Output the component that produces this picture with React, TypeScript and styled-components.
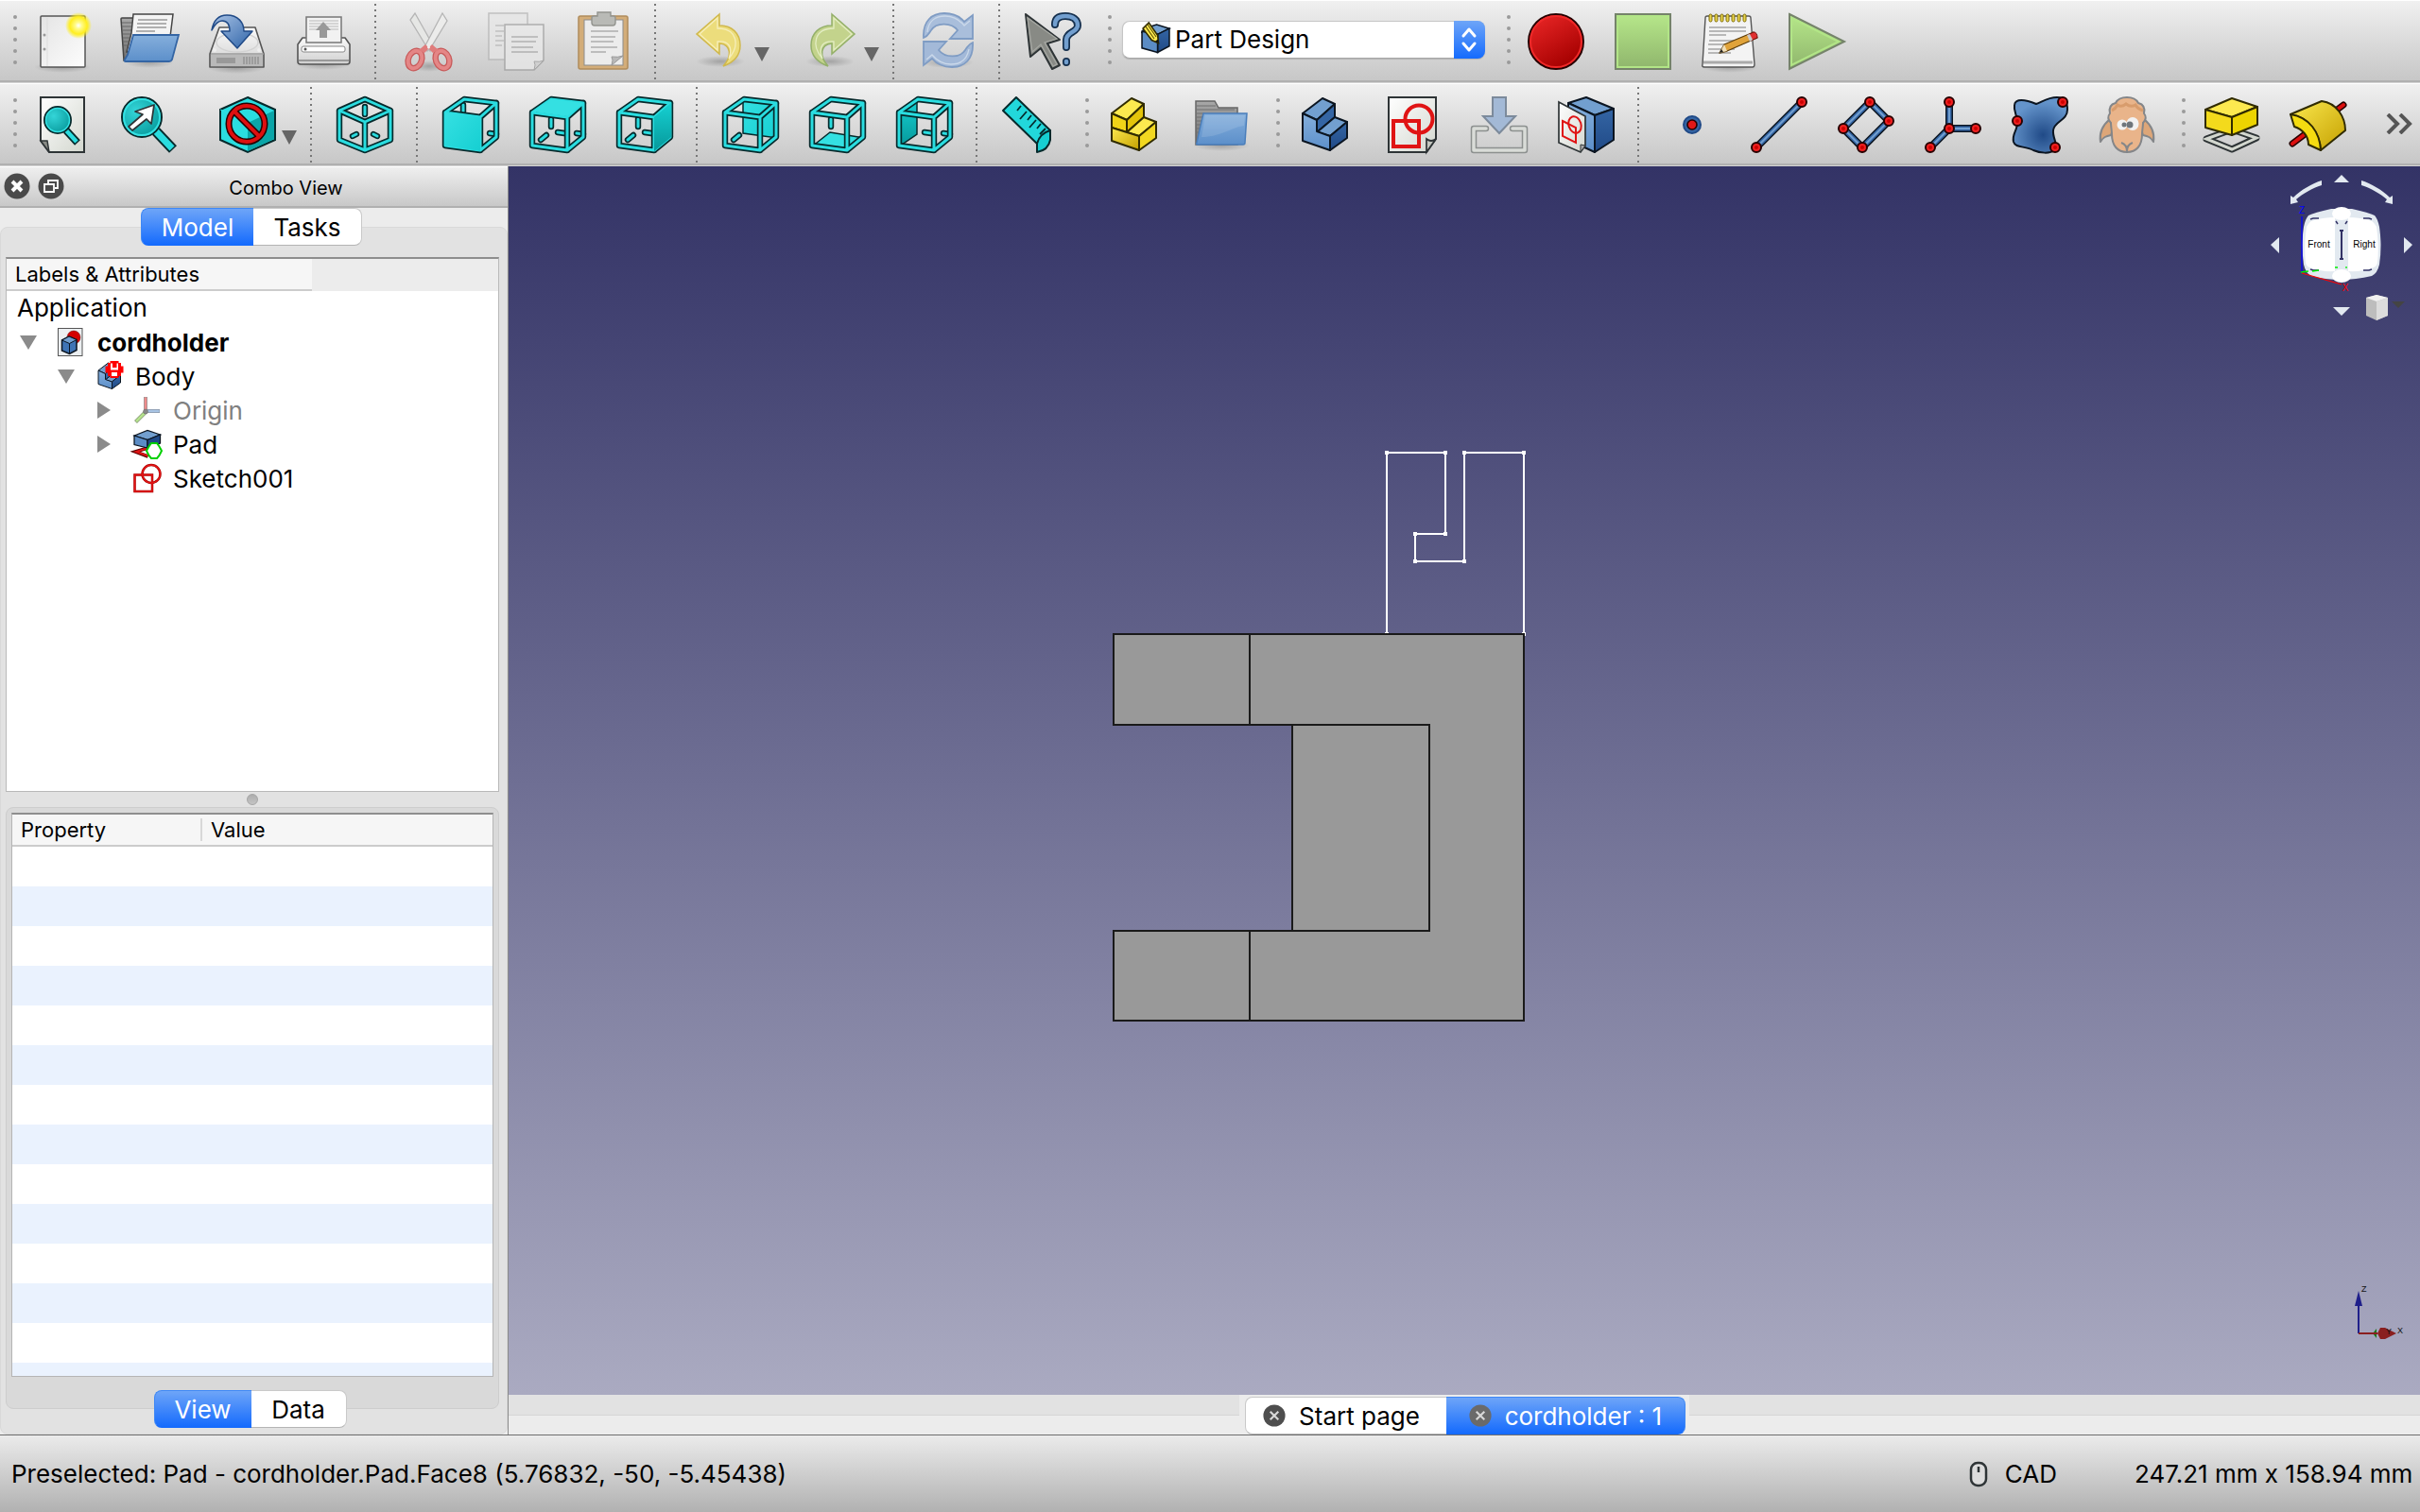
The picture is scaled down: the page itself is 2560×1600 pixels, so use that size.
import React, { useState } from 'react';
import styled, { createGlobalStyle } from 'styled-components';

const Global = createGlobalStyle`
  html, body { margin: 0; padding: 0; }
  body {
    font-family: Inter, "Liberation Sans", sans-serif;
    font-size: 26px;
    color: #000;
    background: #ececec;
    overflow: hidden;
  }
  *, *::before, *::after { box-sizing: border-box; }
  button, select { font: inherit; color: inherit; }
`;

/* ---------- shell ---------- */

const Window = styled.div`
  display: flex;
  flex-direction: column;
  height: 100vh;
`;

const ToolRow = styled.div`
  display: flex;
  flex: none;
  height: 88px;
  border-top: 1px solid #fff;
  border-bottom: 1px solid #d4d4d4;
  box-shadow: inset 0 -2px 0 #b0b0b0;
  background: linear-gradient(#f0f0f0, #c6c6c6);
`;

const ToolGroup = styled.div`
  display: flex;
`;

const Grip = styled.div<{ $narrow?: boolean }>`
  width: ${p => (p.$narrow ? 18 : 20)}px;
  padding: 15px 2px 0 0;
  display: flex;
  flex-direction: column;
  align-items: flex-end;
  gap: 8px;
`;

const GripDot = styled.span`
  width: 4px;
  height: 4px;
  border-radius: 50%;
  background: #9a9a9a;
`;

const Divider = styled.div`
  width: 20px;
  padding: 3px 0 0 8px;
  &::before {
    content: '';
    display: block;
    width: 2px;
    height: 80px;
    background: repeating-linear-gradient(#777 0 2px, transparent 2px 6px);
  }
`;

const ToolButton = styled.button<{ $menu?: boolean }>`
  position: relative;
  width: ${p => (p.$menu ? 116 : 92)}px;
  padding: 13px 0 0;
  border: 0;
  background: none;
  display: flex;
  justify-content: center;
  align-items: flex-start;
`;

const MenuArrow = styled.span`
  position: absolute;
  right: 6px;
  top: 49px;
  border: 8px solid transparent;
  border-top: 15px solid #666;
  border-bottom: 0;
`;

const MoreButton = styled.button`
  margin-left: auto;
  padding: 0 8px 0 0;
  border: 0;
  background: none;
`;

const Picker = styled.label`
  position: relative;
  display: block;
  width: 384px;
  height: 40px;
  margin: 21px 9px 0;
`;

const PickerSelect = styled.select`
  appearance: none;
  width: 100%;
  height: 40px;
  padding: 0 50px 1px 55px;
  border: 1px solid #c6c6c6;
  border-bottom-color: #a8a8a8;
  border-radius: 8px;
  background: #fff;
  box-shadow: 0 1px 1px rgba(0, 0, 0, 0.15);
`;

const PickerIcon = styled.span`
  position: absolute;
  left: 20px;
  top: 3px;
  pointer-events: none;
  svg { display: block; }
`;

const PickerStepper = styled.span`
  position: absolute;
  right: 0;
  top: 0;
  width: 33px;
  height: 40px;
  border-radius: 0 8px 8px 0;
  background: linear-gradient(#6ea5f8, #156bfd);
  pointer-events: none;
  svg { display: block; }
`;

const Main = styled.div`
  display: flex;
  flex: 1;
  min-height: 0;
`;

/* ---------- combo view ---------- */

const Sidebar = styled.aside`
  display: flex;
  flex-direction: column;
  flex: none;
  width: 538px;
  border-right: 1px solid #8c8c8c;
  background: #ececec;
`;

const DockTitle = styled.div`
  display: grid;
  grid-template-columns: 68px 1fr;
  align-items: center;
  height: 44px;
  flex: none;
  border-top: 1px solid #fff;
  border-bottom: 2px solid #b0b0b0;
  background: linear-gradient(#efefef, #c8c8c8);
  font-size: 20px;
  text-align: center;
`;

const DockHeading = styled.span`
  padding-top: 3px;
`;

const DockButtons = styled.div`
  display: flex;
  gap: 8px;
  padding: 0 0 2px 4px;
`;

const RoundButton = styled.button`
  padding: 0;
  border: 0;
  background: none;
  display: block;
  svg { display: block; }
`;

const TabBar = styled.div<{ $edge: 'top' | 'bottom' }>`
  position: relative;
  z-index: 1;
  display: flex;
  flex: none;
  align-self: center;
  margin: ${p => (p.$edge === 'top' ? '0 5px -20px 0' : '-20px 5px 0 0')};
`;

const Tab = styled.button<{ $on: boolean; $wide?: number }>`
  display: flex;
  align-items: center;
  justify-content: center;
  gap: 14px;
  height: 40px;
  padding: 0 18px;
  min-width: ${p => p.$wide ?? 0}px;
  border: 1px solid ${p => (p.$on ? '#3f88f5' : '#c9c9c9')};
  border-bottom-color: ${p => (p.$on ? '#156bfd' : '#b4b4b4')};
  color: ${p => (p.$on ? '#fff' : '#000')};
  background: ${p => (p.$on ? 'linear-gradient(#6ea5f8, #156bfd)' : '#fff')};
  white-space: nowrap;
  &:first-child { border-radius: 8px 0 0 8px; border-right: 0; }
  &:last-child { border-radius: 0 8px 8px 0; border-left: 0; }
`;

const Pane = styled.div`
  display: flex;
  flex-direction: column;
  flex: 1;
  min-height: 0;
  padding: 31px 8px 6px 5px;
  border: 1px solid #d9d9d9;
  border-radius: 8px;
  background: #e2e2e2;
`;

const TreeBox = styled.div`
  flex: 563 1 0;
  min-height: 0;
  border: 1px solid #b9b9b9;
  border-top: 2px solid #8e8e8e;
  background: #fff;
  overflow: hidden;
`;

const TreeHeader = styled.div`
  display: flex;
  height: 34px;
  font-size: 22px;
  background: #ececec;
`;

const TreeHeaderCell = styled.div`
  width: 323px;
  padding: 2px 9px 0;
  line-height: 28px;
  background: #f6f6f6;
  border-bottom: 2px solid #ccc;
`;

const TreeList = styled.ul`
  list-style: none;
  margin: 0;
  padding: 0;
`;

const TreeRow = styled.li<{ $depth: number }>`
  display: grid;
  grid-template-columns: 26px 28px;
  grid-auto-flow: column;
  grid-auto-columns: max-content;
  align-items: center;
  column-gap: 14px;
  height: 36px;
  padding-left: ${p => 14 + p.$depth * 40}px;
`;

const TreeRoot = styled.li`
  height: 36px;
  line-height: 36px;
  padding-left: 11px;
`;

const TreeText = styled.span<{ $bold?: boolean; $dim?: boolean }>`
  font-weight: ${p => (p.$bold ? 700 : 400)};
  color: ${p => (p.$dim ? '#808080' : '#000')};
`;

const Twisty = styled.button`
  padding: 0;
  border: 0;
  background: none;
  svg { display: block; }
`;

const SplitHandle = styled.div`
  display: flex;
  align-items: center;
  justify-content: center;
  height: 16px;
  flex: none;
  &::before {
    content: '';
    width: 12px;
    height: 12px;
    border-radius: 50%;
    border: 1px solid #a6a6a6;
    background: linear-gradient(#adadad, #c4c4c4);
  }
`;

const PropertyGroup = styled.div`
  flex: 598 1 0;
  min-height: 0;
  padding: 5px 5px 33px;
  border: 1px solid #cdcdcd;
  border-radius: 8px;
  background: #d9d9d9;
`;

const TableFrame = styled.div`
  height: 100%;
  border: 1px solid #b5b5b5;
  border-top: 2px solid #8e8e8e;
  background: #fff;
  overflow: hidden;
`;

const PropertyTable = styled.table`
  width: 100%;
  table-layout: fixed;
  border-spacing: 0;
  th {
    height: 34px;
    padding: 0 9px 0;
    font-size: 22px;
    font-weight: 400;
    line-height: 28px;
    text-align: left;
    background: #f6f6f6;
    border-bottom: 2px solid #ccc;
  }
  th:first-child {
    width: 201px;
    background: linear-gradient(#d8d8d8, #d8d8d8) right 0 top 4px / 2px 24px no-repeat #f6f6f6;
  }
  td { height: 42px; padding: 0; }
  tbody tr:nth-child(even) { background: #eaf2fe; }
`;

/* ---------- 3D area ---------- */

const Workspace = styled.main`
  display: flex;
  flex-direction: column;
  flex: 1;
  min-width: 0;
`;

const Canvas = styled.div`
  position: relative;
  flex: 1;
  min-height: 0;
  overflow: hidden;
  background: linear-gradient(#333366, #aaaac1);
`;

const ModelDrawing = styled.svg`
  position: absolute;
  left: 638px;
  top: 301px;
`;

const NavCube = styled.svg`
  position: absolute;
  right: 0;
  top: 0;
`;

const AxisCross = styled.svg`
  position: absolute;
  right: 0;
  bottom: 36px;
`;

const DocStrip = styled.div`
  display: flex;
  justify-content: center;
  flex: none;
  height: 42px;
  background: linear-gradient(#e2e2e2 21px, #d6d6d6 21px 22px, #ececec 22px);
`;

const DocTabs = styled.div`
  display: flex;
  padding: 2px 4px 0 6px;
  background: #ececec;
  button:first-child { padding-right: 28px; }
`;

const StatusBar = styled.footer`
  display: flex;
  align-items: center;
  flex: none;
  height: 82px;
  padding: 0 4px 0 12px;
  border-top: 1px solid #6e6e6e;
  background: linear-gradient(#ebebeb, #b1b1b1);
  white-space: nowrap;
`;

const NavStyle = styled.button`
  display: flex;
  align-items: center;
  gap: 18px;
  margin: 0 82px 0 auto;
  padding: 0;
  border: 0;
  background: none;
`;

const Dimensions = styled.span`
  min-width: 298px;
`;

/* ---------- icons ---------- */

const Ico = ({ children, dim, size = 60 }: { children: React.ReactNode; dim?: number; size?: number }) => (
  <svg width={size} height={size} viewBox="0 0 60 60" overflow="visible" opacity={dim ?? 1} aria-hidden="true">
    {children}
  </svg>
);

const HiddenSvg = styled.svg`
  position: absolute;
`;

const Defs = () => (
  <HiddenSvg width="0" height="0" aria-hidden="true">
    <defs>
      <radialGradient id="sun"><stop offset="0" stopColor="#fff" /><stop offset=".25" stopColor="#fffb8a" /><stop offset=".65" stopColor="#ffee20" /><stop offset="1" stopColor="#fe0" stopOpacity="0" /></radialGradient>
      <linearGradient id="page" x2="1" y2="1"><stop offset="0" stopColor="#e4e4e4" /><stop offset="1" stopColor="#fdfdfd" /></linearGradient>
      <linearGradient id="sheet" x2="1" y2="1"><stop offset="0" stopColor="#fff" /><stop offset="1" stopColor="#d3d7cf" /></linearGradient>
      <linearGradient id="blue" x2="0" y2="1"><stop offset="0" stopColor="#85afdc" /><stop offset="1" stopColor="#5c8fca" /></linearGradient>
      <linearGradient id="deep" x2="0" y2="1"><stop offset="0" stopColor="#3465a4" /><stop offset="1" stopColor="#204a87" /></linearGradient>
      <linearGradient id="arrow" x2="1" y2="1"><stop offset="0" stopColor="#a9c3e6" /><stop offset="1" stopColor="#2f64a8" /></linearGradient>
      <linearGradient id="metal" x2="0" y2="1"><stop offset="0" stopColor="#fafafa" /><stop offset="1" stopColor="#cfcfcf" /></linearGradient>
      <linearGradient id="gray" x2="0" y2="1"><stop offset="0" stopColor="#a8a8a8" /><stop offset="1" stopColor="#707070" /></linearGradient>
      <linearGradient id="cyan" x2="1" y2="1"><stop offset="0" stopColor="#34e0e2" /><stop offset="1" stopColor="#16cfd2" /></linearGradient>
      <linearGradient id="teal" x2="0" y2="1"><stop offset="0" stopColor="#16d0d2" /><stop offset="1" stopColor="#06989a" /></linearGradient>
      <radialGradient id="lens" cx=".35" cy=".35" r=".75"><stop offset="0" stopColor="#34d5d8" /><stop offset="1" stopColor="#06989a" /></radialGradient>
      <linearGradient id="red" x2=".6" y2="1"><stop offset="0" stopColor="#ef2929" /><stop offset="1" stopColor="#a40000" /></linearGradient>
      <linearGradient id="green" x2="0" y2="1"><stop offset="0" stopColor="#b6e78a" /><stop offset="1" stopColor="#8fb56c" /></linearGradient>
      <linearGradient id="yellow" x2="1" y2="1"><stop offset="0" stopColor="#fce94f" /><stop offset="1" stopColor="#c4a000" /></linearGradient>
      <radialGradient id="binder" cx=".55" cy=".68" r=".6"><stop offset="0" stopColor="#204a87" /><stop offset="1" stopColor="#6494cb" /></radialGradient>
      <radialGradient id="shade"><stop offset="0" stopColor="#000" stopOpacity=".22" /><stop offset="1" stopColor="#000" stopOpacity="0" /></radialGradient>
    </defs>
  </HiddenSvg>
);

const Shade = ({ cy = 56, rx = 30 }) => <ellipse cx="30" cy={cy} rx={rx} ry="6" fill="url(#shade)" />;

const NewDoc = () => (
  <Ico>
    <Shade cy={57} />
    <rect x="7" y="3" width="47" height="54" rx="1" fill="url(#page)" stroke="#555" strokeWidth="1.5" />
    <path d="M14 5v51" stroke="#ddd" />
    <circle cx="11" cy="23" r="1.5" fill="#999" /><circle cx="11" cy="38" r="1.5" fill="#999" />
    <circle cx="47" cy="13" r="14" fill="url(#sun)" />
  </Ico>
);

const OpenDoc = () => (
  <Ico>
    <Shade cy={52} rx={26} />
    <path d="M0 6q0-1 1-1h11l3 3v30L5 50H3z" fill="url(#gray)" stroke="#444" strokeWidth="1.5" />
    <path d="M1 10h11M1 14h11M2 18h10M2 22h10M2 26h10M2 30h9M3 34h8" stroke="#666" />
    <path d="M13 1h42l-3 24-40 16-6 0 5-20z" fill="#f4f4f4" stroke="#444" strokeWidth="1.5" />
    <path d="M18 7h31M17 11h31M17 15h31M16 19h20" stroke="#999" strokeWidth="1.5" />
    <path d="M13 23h48L54 49q-1 2-3 2H5q-2 0-1-2l3-5z" fill="url(#blue)" stroke="#3465a4" strokeWidth="1.8" />
  </Ico>
);

const SaveDoc = () => (
  <Ico>
    <Shade cy={58} />
    <path d="M12 15h38l9 28v14H2V43z" fill="url(#metal)" stroke="#555" strokeWidth="1.6" strokeLinejoin="round" />
    <ellipse cx="31" cy="31" rx="22" ry="10" fill="none" stroke="#d2d2d2" strokeWidth="1.5" />
    <path d="M3 43h56" stroke="#999" strokeWidth="1.5" />
    <rect x="3" y="44" width="55" height="12" fill="#b9b9b9" /><rect x="9" y="47" width="20" height="6" fill="#999" />
    <path d="M38 46v8M41 46v8M44 46v8M47 46v8M50 46v8M53 46v8" stroke="#808080" />
    <circle cx="7" cy="39" r="2" fill="#eee" /><circle cx="54" cy="39" r="2" fill="#eee" />
    <path d="M4 18C6 7 11 2 20 2c12 0 18 8 18 17h9L31 37 14 19h9C23 11 20 8 15 8 10 8 7 12 4 18z" fill="url(#arrow)" stroke="#204a87" strokeWidth="1.5" strokeLinejoin="round" />
  </Ico>
);

const PrintDoc = () => (
  <Ico>
    <Shade cy={54} />
    <path d="M8 26h45l5 7v18q0 3-3 3H6q-3 0-3-3V33z" fill="url(#metal)" stroke="#555" strokeWidth="1.6" strokeLinejoin="round" />
    <rect x="12" y="4" width="37" height="27" fill="#f2f2f2" stroke="#777" strokeWidth="1.5" />
    <path d="M15 8h31M15 11h31M15 14h31M15 17h31" stroke="#ccc" strokeWidth="1.5" />
    <path d="M30 9l8 9h-4v8h-8v-8h-4z" fill="#999" />
    <rect x="7" y="35" width="46" height="6" rx="2" fill="#fff" stroke="#888" /><circle cx="11" cy="38" r="1.5" fill="#555" />
    <path d="M4 50h53" stroke="#999" strokeWidth="2" />
  </Ico>
);

const CutIcon = () => (
  <Ico>
    <ellipse cx="30" cy="56" rx="18" ry="6" fill="url(#shade)" />
    <path d="M15 0l18 32-2 8-4-5L10 7z" fill="#e6e7e5" stroke="#b5b5b5" strokeWidth="1.3" />
    <path d="M44 0L26 34l2 6 4-4L49 8z" fill="#ececeb" stroke="#b5b5b5" strokeWidth="1.3" />
    <g fill="none" stroke="#c75a5a" strokeWidth="6.5"><ellipse cx="15" cy="49" rx="7" ry="9.5" transform="rotate(22 15 49)" /><ellipse cx="44" cy="49" rx="7" ry="9.5" transform="rotate(-22 44 49)" /></g>
    <g fill="none" stroke="#e48686" strokeWidth="4"><ellipse cx="15" cy="49" rx="7" ry="9.5" transform="rotate(22 15 49)" /><ellipse cx="44" cy="49" rx="7" ry="9.5" transform="rotate(-22 44 49)" /></g>
    <path d="M19 39l7-6 4 4-5 5zM40 39l-7-6-4 4 5 5z" fill="#e07c7c" />
    <circle cx="29.5" cy="36" r="1.5" fill="#eee" />
  </Ico>
);

const CopyIcon = () => (
  <Ico dim={0.75}>
    <rect x="1" y="0" width="41" height="49" fill="#e6e6e6" stroke="#b3b3b3" strokeWidth="1.5" />
    <path d="M8 13h9M8 19h9M8 24h7M8 29h9M8 34h7" stroke="#c2c2c2" strokeWidth="2" />
    <path d="M18 12h41v38l-10 10H18z" fill="#e9e9e9" stroke="#9c9c9c" strokeWidth="1.5" />
    <path d="M25 25h28M25 30h26M25 36h23M25 41h28" stroke="#b5b5b5" strokeWidth="2" />
    <path d="M49 60q2-6 0-9 6 1 10-1z" fill="#d0d0d0" stroke="#999" />
  </Ico>
);

const PasteIcon = () => (
  <Ico>
    <rect x="4" y="3" width="52" height="56" rx="2" fill="#d3ad79" stroke="#b08c5c" strokeWidth="1.5" />
    <rect x="10" y="7" width="41" height="48" fill="#ececec" stroke="#8d8d8d" />
    <path d="M17 19h29M17 25h26M17 30h24M17 36h28M17 41h16" stroke="#bdbdbd" strokeWidth="2" />
    <path d="M39 55q2-6 0-9 7 1 12-1z" fill="#b9b9b9" stroke="#999" />
    <path d="M18 5q0-2 2-2h4v-4h14v4h3q2 0 2 2v5q0 3-3 3H21q-3 0-3-3z" fill="#b9bab6" stroke="#93948f" strokeWidth="1.4" />
  </Ico>
);

const curvedArrow = 'M29 1L5 22l24 21V32c12 1 14 13 4 24 14-5 18-13 18-22C51 21 42 13 29 13z';

const UndoIcon = () => (
  <Ico>
    <Shade cy={51} rx={26} />
    <path d={curvedArrow} fill="#ecdd7c" stroke="#d0b84c" strokeWidth="1.5" />
    <path d="M27 5L8 22l19 17v-9c11-1 17 5 12 18 12-14 9-32-12-32z" fill="none" stroke="#f6eebb" strokeWidth="1.3" />
  </Ico>
);

const RedoIcon = () => (
  <Ico>
    <Shade cy={51} rx={26} />
    <g transform="translate(61 0) scale(-1 1)">
      <path d={curvedArrow} fill="#c3d38c" stroke="#94b06a" strokeWidth="1.5" />
      <path d="M27 5L8 22l19 17v-9c11-1 17 5 12 18 12-14 9-32-12-32z" fill="none" stroke="#e3edc2" strokeWidth="1.3" />
    </g>
  </Ico>
);

const RefreshIcon = () => {
  const half = 'M5 26C4 8 14 0 27 0c9 0 16 3 21 9l9-7v25H33l8-9C34 9 18 10 13 18c-3 4-3 6-8 8z';
  return (
    <Ico>
      <Shade cy={52} rx={28} />
      <path d={half} fill="#a9bedb" stroke="#7f9cc4" strokeWidth="1.8" />
      <path d={half} transform="rotate(180 31 28.5)" fill="#a3b9d8" stroke="#7f9cc4" strokeWidth="1.8" />
      <path d="M9 20C10 8 18 3 28 3c9 0 15 4 20 10l6-5M53 38c-2 11-9 16-19 16-9 0-15-4-20-10l-6 5" fill="none" stroke="#cbd9ea" strokeWidth="1.3" />
    </Ico>
  );
};

const WhatsThis = () => (
  <Ico>
    <path d="M1 1l36 27-13 4 13 23-8 4-12-22-11 9z" fill="#888a85" stroke="#2e3436" strokeWidth="2" strokeLinejoin="round" />
    <path d="M3 5l31 22-13 4 13 23-4 2-13-23-9 8z" fill="none" stroke="#a5a7a2" strokeWidth="1.3" />
    <g fill="none" strokeLinecap="round"><path d="M32 12C32 5 37 3 43 3c8 0 13 4 13 10 0 7-12 7-12 15v8M44 51v1" stroke="#16314f" strokeWidth="8" /><path d="M32 12C32 5 37 3 43 3c8 0 13 4 13 10 0 7-12 7-12 15v8M44 51v1" stroke="#729fcf" strokeWidth="4.5" /></g>
  </Ico>
);

const PartDesignIcon = () => (
  <Ico size={31}>
    <path d="M2 18l4-8 26-8 26 8-24 12z" fill="#729fcf" stroke="#0b1521" strokeWidth="3" />
    <path d="M34 22l24-12v36L34 59z" fill="url(#deep)" stroke="#0b1521" strokeWidth="3" />
    <path d="M2 16l32 6v37L2 50z" fill="#5b8cc5" stroke="#0b1521" strokeWidth="3" />
    <path d="M4 10L16-2l18 26 2 16-14-6z" fill="#fce94f" stroke="#302b00" strokeWidth="3" />
    <path d="M9 5l18 26M13 1l18 26" stroke="#5a4c00" strokeWidth="2" />
    <path d="M29 36l7 4-1-8z" fill="#111" />
  </Ico>
);

const RecordIcon = () => <Ico><circle cx="30" cy="30" r="29" fill="url(#red)" stroke="#280000" strokeWidth="2" /><circle cx="30" cy="30" r="27" fill="none" stroke="#ef2929" strokeWidth="2" /></Ico>;
const StopIcon = () => <Ico><rect x="1" y="1" width="58" height="58" fill="url(#green)" stroke="#75836a" strokeWidth="2" /><rect x="3" y="3" width="54" height="54" fill="none" stroke="#b2e587" strokeWidth="2" /></Ico>;
const PlayIcon = () => <Ico><path d="M1 1l58 29L1 59z" fill="url(#green)" stroke="#75836a" strokeWidth="2" /><path d="M3 5l50 25L3 55z" fill="none" stroke="#b2e587" strokeWidth="2" /></Ico>;

const MacroIcon = () => (
  <Ico>
    <Shade cy={57} />
    <path d="M4 5q0-2 2-2h44q2 0 2 2l4 49q0 3-2 3H3q-3 0-2-3z" fill="#f3f3f3" stroke="#555" strokeWidth="1.4" />
    <path d="M2 52h52" stroke="#aaa" strokeWidth="3" />
    <path d="M8 15h39M8 19h39M8 23h18M8 29h39M7 33h36M7 38h28M7 42h24" stroke="#a5a5a5" strokeWidth="1.3" />
    {[8, 14, 20, 26, 32, 38, 44].map(x => <rect key={x} x={x} y="1" width="3" height="8" rx="1.5" fill="#e8d44a" stroke="#7d6b08" />)}
    <path d="M19 42l5-9 31-13 4 6-32 14z" fill="#e0a33a" stroke="#5c3d0a" strokeWidth="1.3" strokeLinejoin="round" />
    <path d="M49 23l6-3q4 0 4 6l-7 3z" fill="#e03030" stroke="#7a1010" /><path d="M48 23l3-1 3 6-3 2z" fill="#ccc" />
    <path d="M19 42l5-9 3 7z" fill="#f1dfb8" /><path d="M19 42l2-4 2 3z" fill="#222" />
  </Ico>
);

const CY_DARK = '#062a2c';
const Bars = ({ d }: { d: string }) => (
  <g fill="none" strokeLinejoin="round" strokeLinecap="round">
    <path d={d} stroke={CY_DARK} strokeWidth="6.4" /><path d={d} stroke="#2adde0" strokeWidth="3" />
  </g>
);

const tick = { v: 'M23 24v8', d: 'M12 46l6-5', h: 'M30 38l7 1', r: 'M50 39l7 1', vt: 'M22 9v7' };
const cubeFaces: Record<string, { fill: string; color: string; ticks: string }> = {
  Front: { fill: 'M3 17l37 5v36L3 52z', color: 'url(#cyan)', ticks: tick.vt + tick.r },
  Top: { fill: 'M3 16L23 3l34 4-17 14z', color: '#34e0e2', ticks: tick.v + tick.d + tick.h + tick.r },
  Right: { fill: 'M40 22L58 7v36L40 58z', color: 'url(#teal)', ticks: tick.v + tick.d + tick.h },
  Rear: { fill: 'M22 4l36 4v36l-36-5z', color: 'url(#cyan)', ticks: tick.d },
  Bottom: { fill: 'M3 53l19-15 36 6-18 13z', color: '#34e0e2', ticks: tick.v },
  Left: { fill: 'M3 17L22 4v36L3 53z', color: 'url(#teal)', ticks: tick.h + tick.r },
};

const CubeView = ({ side }: { side: string }) => {
  const f = cubeFaces[side];
  return (
    <Ico>
      {['Rear', 'Bottom', 'Left'].includes(side) && <path d={f.fill} fill={f.color} stroke={CY_DARK} strokeWidth="1.5" />}
      <Bars d={f.ticks} />
      <Bars d="M3 17L23 3l34 4v36L40 57 3 52zM3 17l37 5 17-15M40 22v35" />
      {['Front', 'Top', 'Right'].includes(side) && <path d={f.fill} fill={f.color} />}
    </Ico>
  );
};

const IsoView = () => (
  <Ico>
    <Bars d="M30 11v8M17 42l4-2M39 40l4 2" />
    <Bars d="M30 3l27 12v31L30 57 3 46V15zM3 15l27 12 27-12M30 27v30" />
  </Ico>
);

const DrawStyle = () => (
  <Ico>
    <path d="M30 1l29 13v32L30 59 1 46V14z" fill="#2adde0" stroke={CY_DARK} strokeWidth="2" />
    <path d="M30 28v30l28-13V15z" fill="#0aa5a8" /><path d="M1 14l29 13" stroke="#34e0e2" />
    <g fill="none"><circle cx="29" cy="29" r="19" stroke="#280000" strokeWidth="7" /><path d="M16 16l26 26" stroke="#280000" strokeWidth="7" /><circle cx="29" cy="29" r="19" stroke="#dd1010" strokeWidth="4" /><path d="M16 16l26 26" stroke="#dd1010" strokeWidth="4" /></g>
  </Ico>
);

const FitAll = () => (
  <Ico>
    <path d="M7 1h46v58H16L7 47z" fill="url(#sheet)" stroke="#2e3436" strokeWidth="2" />
    <path d="M7 47h7l2 12z" fill="#888a85" stroke="#2e3436" strokeWidth="1.5" />
    <path d="M34 36l12 13" stroke={CY_DARK} strokeWidth="8" /><path d="M34 36l11 12" stroke="#2adde0" strokeWidth="4.5" />
    <circle cx="25" cy="25" r="14" fill="url(#lens)" stroke={CY_DARK} strokeWidth="2" /><circle cx="25" cy="25" r="12.5" fill="none" stroke="#34e0e2" strokeWidth="1.5" />
  </Ico>
);

const FitSelection = () => (
  <Ico>
    <path d="M37 37l18 19" stroke={CY_DARK} strokeWidth="11" /><path d="M37 37l17 18" stroke="#2adde0" strokeWidth="7" />
    <circle cx="22" cy="22" r="21" fill="url(#lens)" stroke={CY_DARK} strokeWidth="2" /><circle cx="22" cy="22" r="19" fill="none" stroke="#34e0e2" strokeWidth="2" />
    <path d="M35 9l-3 20-5-5-15 12-4-4 15-13-8-3z" fill="#fff" stroke="#2e3436" strokeWidth="1.7" strokeLinejoin="round" />
  </Ico>
);

const Measure = () => (
  <Ico>
    <path d="M15 1L1 15l36 35q5-10 14-14z" fill="#22d8db" stroke={CY_DARK} strokeWidth="2" strokeLinejoin="round" />
    <path d="M37 50v9q12-2 14-13V36q-11 3-14 14z" fill="#16cfd2" stroke={CY_DARK} strokeWidth="2" strokeLinejoin="round" />
    <path d="M20 10l-4 5M26 16l-7 8M31 20l-4 5M36 25l-7 8M41 29l-4 5M46 34l-6 6" stroke={CY_DARK} strokeWidth="1.8" />
  </Ico>
);

const PartIcon = () => (
  <Ico>
    <g stroke="#302b00" strokeWidth="2" strokeLinejoin="round">
      <path d="M6 18L27 2l13 6-18 17z" fill="#fce94f" />
      <path d="M6 18l16 7v13L6 33z" fill="#f0d418" />
      <path d="M22 25L40 8v14L22 38z" fill="#e3c40a" />
      <path d="M22 38l18-16 13 5-18 15z" fill="#fce94f" />
      <path d="M6 33l29 9v15L6 47z" fill="url(#yellow)" />
      <path d="M35 42l18-15v17L35 57z" fill="#f2d820" />
    </g>
  </Ico>
);

const GroupIcon = () => (
  <Ico>
    <Shade cy={52} />
    <path d="M3 5h20l4 7h20v39H3z" fill="url(#gray)" stroke="#666" strokeWidth="1.5" />
    <path d="M4 10h20M4 14h40M4 18h8M4 22h7M4 26h7M4 30h6M4 34h6M4 38h5" stroke="#6f6f6f" />
    <path d="M11 18h46l-2 31q0 2-2 2H5q-2 0-1-2z" fill="url(#blue)" stroke="#4a7ebb" strokeWidth="1.5" />
    <path d="M13 20h42l-1 11c-14 2-25 12-45 12z" fill="#fff" opacity=".12" />
  </Ico>
);

const BodyShape = () => (
  <g stroke="#0b1521" strokeWidth="2" strokeLinejoin="round">
    <path d="M6 18L27 2l13 6-19 17z" fill="#729fcf" />
    <path d="M21 25L40 8v14L21 38z" fill="#3465a4" />
    <path d="M21 38l19-16 13 5-18 15z" fill="#729fcf" />
    <path d="M6 18l15 7v12l14 5v15L6 47z" fill="url(#blue)" />
    <path d="M35 42l18-15v17L35 57z" fill="url(#deep)" />
  </g>
);
const BodyIcon = () => <Ico><BodyShape /></Ico>;

const SketchMark = ({ w = 4 }: { w?: number }) => (
  <g fill="none" stroke="#e01414" strokeWidth={w}><rect x="10" y="26" width="27" height="27" /><circle cx="37" cy="24" r="14.5" /></g>
);

const NewSketch = () => (
  <Ico>
    <path d="M5 1h50v44L45 59H5z" fill="url(#sheet)" stroke="#2e3436" strokeWidth="2" />
    <SketchMark />
    <path d="M45 59V45q5 4 10 0z" fill="#c3c6bf" stroke="#2e3436" strokeWidth="1.7" />
  </Ico>
);

const ValidateSketch = () => (
  <Ico>
    <g fill="none" strokeLinejoin="round" strokeLinecap="round"><path d="M16 34H3v23h54V34H44" stroke="#8c908f" strokeWidth="6.5" /><path d="M16 34H3v23h54V34H44" stroke="#d9dcd8" strokeWidth="3.5" /></g>
    <path d="M23 1h14v20h10L30 39 13 21h10z" fill="#a3b9d6" stroke="#7c8a9b" strokeWidth="2" />
  </Ico>
);

const MapSketch = () => (
  <Ico>
    <g stroke="#0b1521" strokeWidth="2" strokeLinejoin="round"><path d="M11 7L30 1l29 12-20 7z" fill="#729fcf" /><path d="M11 7l28 13v39L11 46z" fill="url(#blue)" /><path d="M39 20l20-7v33L39 59z" fill="url(#deep)" /></g>
    <path d="M1 6l28 15v31l-5 7L1 49z" fill="url(#sheet)" stroke="#2e3436" strokeWidth="1.7" />
    <g fill="none" stroke="#e01414" strokeWidth="2"><path d="M5 26l14 7v16L5 42z" /><ellipse cx="18" cy="30" rx="6.5" ry="9" transform="rotate(-18 18 30)" /></g>
    <path d="M24 59v-8l5 1z" fill="#aaa" stroke="#2e3436" />
  </Ico>
);

const Node = ({ x, y }: { x: number; y: number }) => <g><circle cx={x} cy={y} r="5" fill="#ef2020" stroke="#280000" strokeWidth="2" /><circle cx={x} cy={y} r="2" fill="#c00" /></g>;
const Link = ({ d }: { d: string }) => <g fill="none"><path d={d} stroke="#0b1521" strokeWidth="8" /><path d={d} stroke="#3465a4" strokeWidth="5" /><path d={d} stroke="#729fcf" strokeWidth="2" /></g>;

const PointIcon = () => <Ico><circle cx="30" cy="30" r="9" fill="#3465a4" stroke="#204a87" strokeWidth="2" /><circle cx="30" cy="30" r="5" fill="#e01818" stroke="#280000" strokeWidth="1.6" /></Ico>;
const LineIcon = () => <Ico><Link d="M54 6L6 54" /><Node x={54} y={6} /><Node x={6} y={54} /></Ico>;
const PlaneIcon = () => <Ico><Link d="M34 6L6 34l20 20 28-28z" /><Node x={34} y={6} /><Node x={6} y={34} /><Node x={26} y={54} /><Node x={54} y={26} /></Ico>;
const CoordIcon = () => <Ico><Link d="M26 6v28h28M26 34L6 54" /><Node x={26} y={6} /><Node x={26} y={34} /><Node x={54} y={34} /><Node x={6} y={54} /></Ico>;
const BinderIcon = () => (
  <Ico>
    <path d="M3 9C4 2 14 3 26 8 32 6 38 1 48 1c9 0 11 5 11 13 0 12-14 12-15 22-1 8 6 16 2 21-6 4-16 3-23 0-9-5-19-2-21-9-2-9 5-12 4-22C5 18 2 15 3 9z" fill="url(#binder)" stroke="#0b1521" strokeWidth="2" />
    <Node x={54} y={6} /><Node x={6} y={26} /><Node x={46} y={54} />
  </Ico>
);

const CloneIcon = () => (
  <Ico>
    <path d="M12 24C6 29 0 36 2 48c3-5 6-6 11-7l4-12zM48 24c6 5 12 12 10 24-3-5-6-6-11-7l-4-12z" fill="#dda678" stroke="#848689" strokeWidth="2" strokeLinejoin="round" />
    <path d="M13 28q-5-5-1-10-2-9 6-11 3-6 12-6t12 6q8 2 6 11 4 5-1 10c0 4-1 8-1 12 0 12-6 19-16 19S14 52 14 40c0-4-1-8-1-12z" fill="#e9b48a" stroke="#848689" strokeWidth="2" />
    <path d="M14 15q4-2 6-6 4 3 9-1 5 4 10 1 2 4 8 6" fill="none" stroke="#d89c6c" strokeWidth="3" />
    <ellipse cx="25" cy="30" rx="5.500" ry="5.500" fill="#f2f2f2" /><ellipse cx="36" cy="29" rx="6.500" ry="7" fill="#f2f2f2" />
    <circle cx="27" cy="30" r="2.5" fill="#6f767c" /><circle cx="33" cy="30" r="3.5" fill="#6f767c" />
    <path d="M24 49q6 2 6 9 0-7 6-9" fill="none" stroke="#848689" strokeWidth="2" />
  </Ico>
);

const PadIcon = () => (
  <Ico>
    <path d="M4 45l27-10 26 9-26 12z" fill="none" stroke="#2e3436" strokeWidth="7" strokeLinejoin="round" /><path d="M4 45l27-10 26 9-26 12z" fill="none" stroke="#d3d7cf" strokeWidth="3" />
    <g stroke="#302b00" strokeWidth="2" strokeLinejoin="round"><path d="M3 14L31 2l27 9-27 11z" fill="#fce94f" /><path d="M3 14l28 8v19L3 33z" fill="#f3da1c" /><path d="M31 22l27-11v19L31 41z" fill="#edd400" /></g>
  </Ico>
);

const RevolveIcon = () => (
  <Ico>
    <path d="M3 50L57 9" stroke="#280000" strokeWidth="7" strokeLinecap="round" /><path d="M3 50L57 9" stroke="#dd1010" strokeWidth="4" strokeLinecap="round" />
    <path d="M1 19L34 5c16 2 25 17 25 31L33 57C32 40 21 22 1 19z" fill="url(#yellow)" stroke="#302b00" strokeWidth="2" strokeLinejoin="round" />
    <path d="M1 19c20 3 31 19 32 38l-13-6c0-9-6-16-15-19z" fill="#f5dc10" stroke="#302b00" strokeWidth="2" strokeLinejoin="round" />
  </Ico>
);

/* ---------- tree icons ---------- */

const DocTreeIcon = () => (
  <Ico size={30}>
    <rect x="1" y="1" width="51" height="58" fill="#eceff1" stroke="#555" strokeWidth="2" />
    <circle cx="34" cy="20" r="14" fill="#d40000" stroke="#600" />
    <path d="M9 26l15-8 16 7v22L25 55 9 48z" fill="#3f74b5" stroke="#0b1521" strokeWidth="3" /><path d="M9 26l16 7 15-8-16-7z" fill="#729fcf" stroke="#0b1521" strokeWidth="2" /><path d="M25 33v22" stroke="#0b1521" strokeWidth="2" />
  </Ico>
);
const BodyTreeIcon = () => (
  <Ico size={30}>
    <BodyShape />
    <path d="M31-2h18v4h5v7h5v14h-5v7h-5v4H31v-4h-5v-7h-5V9h5V2h5z" fill="#f00" />
    <path d="M32 3h4v9h9V3h3v14H32zM34 22h12v8H34z" fill="#fff" />
  </Ico>
);
const OriginTreeIcon = () => (
  <Ico size={30}>
    <path d="M26 2v30" stroke="#999" strokeWidth="8" /><path d="M26 32h30" stroke="#8a97a8" strokeWidth="8" /><path d="M26 34L5 55" stroke="#889a78" strokeWidth="8" />
    <path d="M26 3v29" stroke="#ee8a8a" strokeWidth="5" /><path d="M26 32h29" stroke="#a8c4e4" strokeWidth="5" /><path d="M26 34L6 54" stroke="#b4e28c" strokeWidth="5" />
    <circle cx="26" cy="33" r="5" fill="#888" stroke="#666" />
  </Ico>
);
const PadTreeIcon = () => (
  <Ico size={30}>
    <path d="M31 38L4 46l27 10" fill="none" stroke="#5a0000" strokeWidth="7" /><path d="M31 38L6 46l25 9" fill="none" stroke="#e01414" strokeWidth="4" />
    <g stroke="#0b1521" strokeWidth="2.5"><path d="M2 12L30 1l27 9-27 11z" fill="#729fcf" /><path d="M2 12l28 9v17L2 31z" fill="#5b8cc5" /><path d="M30 21l27-11v18L30 38z" fill="#204a87" /></g>
    <path d="M38 28h12l5 7 5 9-5 10-5 6H38l-5-6-5-10 5-9z" fill="#fff" stroke="#00d000" strokeWidth="4" />
  </Ico>
);
const SketchTreeIcon = () => (
  <Ico size={30}>
    <g fill="none"><rect x="3" y="23" width="37" height="35" stroke="#a40000" strokeWidth="5" /><circle cx="38" cy="21" r="19" stroke="#a40000" strokeWidth="5" /><rect x="3" y="23" width="37" height="35" stroke="#e41414" strokeWidth="3" /><circle cx="38" cy="21" r="19" stroke="#e41414" strokeWidth="3" /></g>
  </Ico>
);

const CloseDisc = ({ size, fill = '#4a4a4a' }: { size: number; fill?: string }) => (
  <svg width={size} height={size} viewBox="0 0 28 28" aria-hidden="true">
    <circle cx="14" cy="14" r="13.5" fill={fill} /><path d="M9 9l10 10M19 9L9 19" stroke={size > 24 ? '#fff' : '#d8d8d8'} strokeWidth={size > 24 ? 4 : 2.5} />
  </svg>
);

const Triangle = ({ open }: { open: boolean }) => (
  <svg width="18" height="18" viewBox="0 0 18 18" aria-hidden="true">
    <path d={open ? 'M0 2h18L9 17z' : 'M2 0v18l14-9z'} fill="#8b8b8b" />
  </svg>
);

/* ---------- parts ---------- */

const GripHandle = ({ narrow }: { narrow?: boolean }) => (
  <Grip $narrow={narrow}>{[0, 1, 2, 3, 4].map(i => <GripDot key={i} />)}</Grip>
);

type Entry = '|' | [string, React.FC, boolean?];

const Tools = ({ items, narrow }: { items: Entry[]; narrow?: boolean }) => (
  <ToolGroup role="toolbar">
    <GripHandle narrow={narrow} />
    {items.map((it, i) =>
      it === '|' ? <Divider key={i} /> : (
        <ToolButton key={i} aria-label={it[0]} $menu={it[2]}>
          {React.createElement(it[1])}
          {it[2] && <MenuArrow />}
        </ToolButton>
      ))}
  </ToolGroup>
);

const view = (side: string): Entry => [side, () => <CubeView side={side} />];

const fileTools: Entry[] = [
  ['New', NewDoc], ['Open', OpenDoc], ['Save', SaveDoc], ['Print', PrintDoc], '|',
  ['Cut', CutIcon], ['Copy', CopyIcon], ['Paste', PasteIcon], '|',
  ['Undo', UndoIcon, true], ['Redo', RedoIcon, true], '|', ['Refresh', RefreshIcon], '|', ["What's this", WhatsThis],
];
const macroTools: Entry[] = [['Record macro', RecordIcon], ['Stop macro', StopIcon], ['Macros', MacroIcon], ['Run macro', PlayIcon]];
const viewTools: Entry[] = [
  ['Fit all', FitAll], ['Fit selection', FitSelection], ['Draw style', DrawStyle, true], '|', ['Isometric', IsoView], '|',
  view('Front'), view('Top'), view('Right'), '|', view('Rear'), view('Bottom'), view('Left'), '|', ['Measure', Measure],
];
const structureTools: Entry[] = [['Create part', PartIcon], ['Create group', GroupIcon]];
const helperTools: Entry[] = [
  ['Create body', BodyIcon], ['Create sketch', NewSketch], ['Validate sketch', ValidateSketch], ['Map sketch', MapSketch], '|',
  ['Datum point', PointIcon], ['Datum line', LineIcon], ['Datum plane', PlaneIcon], ['Coordinate system', CoordIcon],
  ['Shape binder', BinderIcon], ['Clone', CloneIcon],
];
const modelTools: Entry[] = [['Pad', PadIcon], ['Revolution', RevolveIcon]];

const treeRows: { text: string; depth: number; open?: boolean; Icon: React.FC; bold?: boolean; dim?: boolean }[] = [
  { text: 'cordholder', depth: 0, open: true, Icon: DocTreeIcon, bold: true },
  { text: 'Body', depth: 1, open: true, Icon: BodyTreeIcon },
  { text: 'Origin', depth: 2, open: false, Icon: OriginTreeIcon, dim: true },
  { text: 'Pad', depth: 2, open: false, Icon: PadTreeIcon },
  { text: 'Sketch001', depth: 2, Icon: SketchTreeIcon },
];

const Model = () => (
  <ModelDrawing width="440" height="608" viewBox="1176 477 440 608" shapeRendering="crispEdges" aria-label="Pad and sketch">
    <g fill="none" stroke="#fff" strokeWidth="2"><path d="M1467 671V479H1529V565H1497V594H1549V479H1612V671" /></g>
    {[[1467, 479], [1529, 479], [1549, 479], [1612, 479], [1529, 565], [1497, 565], [1497, 594], [1549, 594], [1467, 671], [1612, 671]].map(([x, y]) => (
      <rect key={`${x}-${y}`} x={x - 2} y={y - 2} width="4" height="4" fill="#fff" />
    ))}
    <path d="M1178 671H1612V1080H1178V985H1367V767H1178z" fill="#999" stroke="#1a1a1a" strokeWidth="2" />
    <path d="M1322 671V767M1322 985V1080M1367 767H1512V985H1367" fill="none" stroke="#1a1a1a" strokeWidth="2" />
  </ModelDrawing>
);

const Navigator = () => (
  <NavCube width="200" height="174" viewBox="0 6 200 174" aria-label="Navigation cube">
    <g fill="#e2e9f0">
      <path d="M117 15l8 8h-16zM117 164l9-9h-18zM42 89l9-8v17zM192 89l-9-8v17z" />
      <path d="M96 21v5C86 29 76 35 69 41l2 3-8 2V37l3 2C74 31 86 24 96 21zM138 21v5c10 3 20 9 27 15l-2 3 8 2V37l-3 2C160 31 148 24 138 21z" />
      <path d="M82 58q-3 3-5 12-3 20 0 40 2 9 8 12 30 8 64 0 6-3 8-12 3-20 0-40-2-9-5-12-6-3-24-7H106q-18 4-24 7z" />
    </g>
    <g fill="#fff">
      <path d="M80 70q3-5 5-6 12-4 25-4v57q-14 1-27-4-3-1-4-5-2-17 1-38zM154 70q-3-5-5-6-12-4-25-4v57q14 1 27-4 3-1 4-5 2-17-1-38z" />
      <ellipse cx="117" cy="56" rx="10" ry="7" /><ellipse cx="117" cy="122" rx="10" ry="7" />
    </g>
    <path d="M117 74v30M115 74h4M115 104h4" stroke="#333366" strokeWidth="2" fill="none" />
    <path d="M84 62l3-1h6M149 62l-3-1h-6M84 115l3 1h6M149 115l-3 1h-6M111 64l2 3M123 64l-2 3" stroke="#333366" strokeWidth="1.5" fill="none" />
    <path d="M75 59v59" stroke="#00f" strokeWidth="1.3" /><path d="M74 118l8-1M86 117l7-1M110 113h3M122 112v2" stroke="#0e0" strokeWidth="1.3" /><path d="M75 119l42 12" stroke="#f00" strokeWidth="1.3" />
    <g fontFamily='"Liberation Sans Narrow", "Liberation Sans", sans-serif' fontSize="10" textAnchor="middle" fill="#000">
      <text x="93" y="92">Front</text><text x="141" y="92">Right</text>
      <text x="75" y="56" fill="#00f">Z</text><text x="121" y="138" fill="#f00">X</text>
    </g>
    <path d="M143 145l11-3 12 3v19l-12 5-11-5z" fill="#bdbdbd" /><path d="M143 145l11-3 12 3-12 4z" fill="#f0f0f0" /><path d="M154 149l12-4v19l-12 5z" fill="#dcdcdc" />
    <path d="M170 149h14l-7 7z" fill="#444" />
  </NavCube>
);

const Axes = () => (
  <AxisCross width="120" height="120" viewBox="0 0 120 120" aria-label="Axis cross">
    <path d="M55 91V60" stroke="#1f1f8a" strokeWidth="2" /><path d="M55 46l4 16h-8z" fill="#1f1f8a" />
    <path d="M70 91l4-5v10z" fill="#1a7a1a" /><path d="M55 91h20" stroke="#8a1f1f" strokeWidth="2" /><path d="M75 91l3-6h5l12 6-12 6h-5z" fill="#8a1f1f" />
    <g fontFamily='"Liberation Sans", sans-serif' fontSize="9" fill="#111"><text x="58" y="47">Z</text><text x="84" y="92">Y</text><text x="96" y="91">X</text></g>
  </AxisCross>
);

export default function App() {
  const [panel, setPanel] = useState('Model');
  const [prop, setProp] = useState('View');
  const [doc, setDoc] = useState('cordholder : 1');
  return (
    <Window>
      <Global />
      <Defs />
      <ToolRow>
        <Tools items={fileTools} />
        <ToolGroup>
          <GripHandle narrow />
          <Picker>
            <PickerSelect aria-label="Workbench" defaultValue="Part Design"><option>Part Design</option></PickerSelect>
            <PickerIcon><PartDesignIcon /></PickerIcon>
            <PickerStepper>
              <svg width="33" height="40" viewBox="0 0 33 40"><path d="M10 16l6-7 6 7M10 24l6 7 6-7" fill="none" stroke="#fff" strokeWidth="3" strokeLinecap="round" strokeLinejoin="round" /></svg>
            </PickerStepper>
          </Picker>
        </ToolGroup>
        <Tools items={macroTools} />
      </ToolRow>
      <ToolRow>
        <Tools items={viewTools} />
        <Tools items={structureTools} narrow />
        <Tools items={helperTools} narrow />
        <Tools items={modelTools} narrow />
        <MoreButton aria-label="More tools">
          <svg width="28" height="22" viewBox="0 0 28 22"><path d="M2 1l10 10L2 21M15 1l10 10-10 10" fill="none" stroke="#555" strokeWidth="4" /></svg>
        </MoreButton>
      </ToolRow>

      <Main>
        <Sidebar>
          <DockTitle>
            <DockButtons>
              <RoundButton aria-label="Close"><CloseDisc size={28} /></RoundButton>
              <RoundButton aria-label="Float">
                <svg width="28" height="28" viewBox="0 0 28 28"><circle cx="14" cy="14" r="13.5" fill="#4a4a4a" /><path d="M11 12V8h10v8h-3M7 12h10v8H7z" fill="none" stroke="#fff" strokeWidth="1.8" /></svg>
              </RoundButton>
            </DockButtons>
            <DockHeading>Combo View</DockHeading>
          </DockTitle>
          <TabBar $edge="top" role="tablist">
            <Tab role="tab" $on={panel === 'Model'} $wide={119} onClick={() => setPanel('Model')}>Model</Tab>
            <Tab role="tab" $on={panel === 'Tasks'} $wide={115} onClick={() => setPanel('Tasks')}>Tasks</Tab>
          </TabBar>
          <Pane>
            <TreeBox>
              <TreeHeader><TreeHeaderCell>Labels &amp; Attributes</TreeHeaderCell></TreeHeader>
              <TreeList>
                <TreeRoot>Application</TreeRoot>
                {treeRows.map(r => (
                  <TreeRow key={r.text} $depth={r.depth}>
                    {r.open === undefined ? <span /> : <Twisty aria-label={`Toggle ${r.text}`}><Triangle open={r.open} /></Twisty>}
                    <r.Icon />
                    <TreeText $bold={r.bold} $dim={r.dim}>{r.text}</TreeText>
                  </TreeRow>
                ))}
              </TreeList>
            </TreeBox>
            <SplitHandle />
            <PropertyGroup>
              <TableFrame>
                <PropertyTable>
                  <thead><tr><th>Property</th><th>Value</th></tr></thead>
                  <tbody>{Array.from({ length: 14 }, (_, i) => <tr key={i}><td /><td /></tr>)}</tbody>
                </PropertyTable>
              </TableFrame>
            </PropertyGroup>
            <TabBar $edge="bottom" role="tablist">
              <Tab role="tab" $on={prop === 'View'} $wide={103} onClick={() => setProp('View')}>View</Tab>
              <Tab role="tab" $on={prop === 'Data'} $wide={101} onClick={() => setProp('Data')}>Data</Tab>
            </TabBar>
          </Pane>
        </Sidebar>

        <Workspace>
          <Canvas>
            <Model />
            <Navigator />
            <Axes />
          </Canvas>
          <DocStrip>
            <DocTabs role="tablist">
              {['Start page', 'cordholder : 1'].map((t, i) => (
                <Tab key={t} role="tab" $on={doc === t} $wide={i ? 253 : 209} onClick={() => setDoc(t)}>
                  <CloseDisc size={24} fill={i ? '#6a6a6a' : '#4e4e4e'} />{t}
                </Tab>
              ))}
            </DocTabs>
          </DocStrip>
        </Workspace>
      </Main>

      <StatusBar>
        <span>Preselected: Pad - cordholder.Pad.Face8 (5.76832, -50, -5.45438)</span>
        <NavStyle>
          <svg width="20" height="28" viewBox="0 0 20 28"><rect x="2" y="2" width="16" height="24" rx="7" fill="#dcdcdc" stroke="#2e3436" strokeWidth="2.5" /><path d="M10 6v6" stroke="#2e3436" strokeWidth="2.5" /></svg>
          CAD
        </NavStyle>
        <Dimensions>247.21 mm x 158.94 mm</Dimensions>
      </StatusBar>
    </Window>
  );
}
